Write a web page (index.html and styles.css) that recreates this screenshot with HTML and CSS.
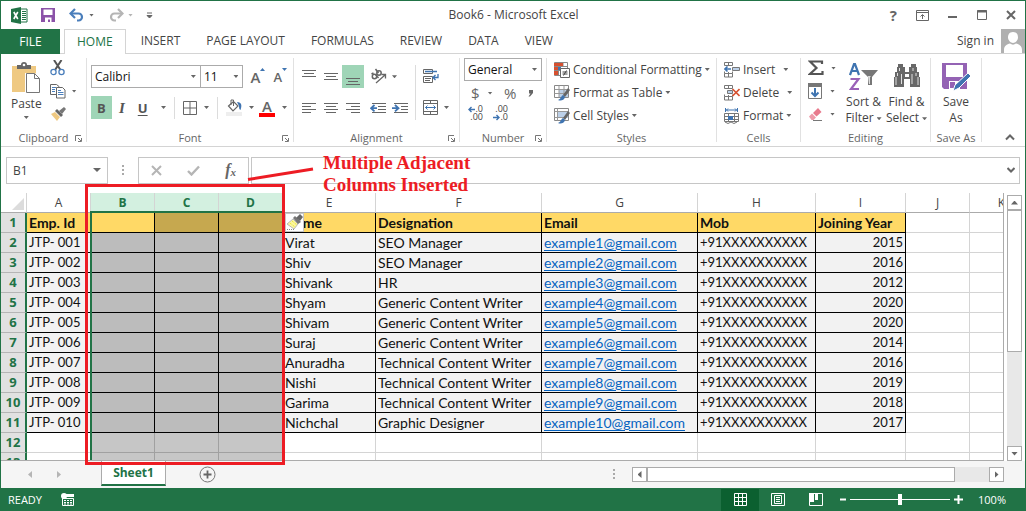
FILE: index.html
```html
<!DOCTYPE html>
<html lang="en">
<head>
<meta charset="utf-8">
<title>Book6 - Microsoft Excel</title>
<link rel="stylesheet" href="styles.css">
</head>
<body>
<div class="window">
  <header class="titlebar">
    <div class="quick">
      <svg class="logo" width="17" height="17" viewBox="0 0 17 17"><path d="M9 2h7v13H9z" fill="#fff" stroke="#217346"/><path d="M11 4.500h4M11 6.500h4M11 8.500h4M11 10.500h4M11 12.500h4" stroke="#217346"/><path d="M0 2l10-2v17L0 15z" fill="#217346"/><path d="M2.800 5l4 7M6.800 5l-4 7" stroke="#fff" stroke-width="1.600"/></svg>
      <button class="icon" aria-label="Save"><svg width="14" height="14" viewBox="0 0 14 14"><path d="M0 0h14v14H0z" fill="#8b52a8"/><path d="M2.500 1.500h9V7h-9zM4 9.500h6.500V14H9v-2.500H7V14H4z" fill="#fff"/></svg></button>
      <button class="icon undo" aria-label="Undo"><svg width="16" height="14" viewBox="0 0 16 14"><path d="M2 5.500h7.500a3.500 3.500 0 0 1 0 7H8" fill="none" stroke="#4a7ebb" stroke-width="2.200"/><path d="M6 1L1.500 5.500 6 10" fill="none" stroke="#4a7ebb" stroke-width="2.200"/></svg><span class="caret"></span></button>
      <button class="icon redo" aria-label="Redo"><svg width="16" height="14" viewBox="0 0 16 14"><path d="M14 5.500H6.500a3.500 3.500 0 0 0 0 7H8" fill="none" stroke="#b5b5b5" stroke-width="2.200"/><path d="M10 1l4.500 4.500L10 10" fill="none" stroke="#b5b5b5" stroke-width="2.200"/></svg><span class="caret pale"></span></button>
      <button class="icon customize" aria-label="Customize toolbar"><svg width="7" height="7" viewBox="0 0 7 7"><path d="M1 1h5M1 3.500h5L3.500 6z" stroke="#666" fill="#666" stroke-width="1"/></svg></button>
    </div>
    <h1 class="doc-title">Book6 - Microsoft Excel</h1>
    <div class="window-buttons">
      <button class="icon help" aria-label="Help">?</button>
      <button class="icon" aria-label="Ribbon display"><svg width="13" height="11" viewBox="0 0 13 11"><path d="M.5.5h12v10H.5zM.5 2.500h12M6.500 9V5M4.500 6.500l2-2 2 2" fill="none" stroke="#666"/></svg></button>
      <button class="icon" aria-label="Minimize"><svg width="10" height="10" viewBox="0 0 10 10"><path d="M0 7h9" stroke="#666" stroke-width="2"/></svg></button>
      <button class="icon" aria-label="Maximize"><svg width="10" height="10" viewBox="0 0 10 10"><path d="M.5.5h9v9h-9z" fill="none" stroke="#666"/><path d="M0 1.500h10" stroke="#666" stroke-width="2"/></svg></button>
      <button class="icon" aria-label="Close"><svg width="10" height="10" viewBox="0 0 10 10"><path d="M1 1l8 8M9 1L1 9" stroke="#666" stroke-width="2"/></svg></button>
    </div>
  </header>

  <nav class="tabs">
    <button class="tab file">FILE</button>
    <button class="tab active">HOME</button>
    <button class="tab">INSERT</button>
    <button class="tab">PAGE LAYOUT</button>
    <button class="tab">FORMULAS</button>
    <button class="tab">REVIEW</button>
    <button class="tab">DATA</button>
    <button class="tab">VIEW</button>
    <a class="sign-in" href="#">Sign in</a>
    <svg class="avatar" width="24" height="24" viewBox="0 0 24 24"><path d="M0 0h24v24H0z" fill="#b0b0b0"/><path d="M12 3c4 0 5 3 5 5.500S14.500 14 12 14 7 11 7 8.500 8 3 12 3z" fill="#fff"/><path d="M3 24v-3c0-4 3-6 6-6.500 2 1.500 4 1.500 6 0 3 .5 6 2.500 6 6.500v3z" fill="#fff"/></svg>
  </nav>

  <section class="ribbon">
    <div class="group clipboard">
      <div class="body">
        <button class="big">
          <svg width="29" height="32" viewBox="0 0 29 32"><path d="M0 4h24v26H0z" fill="#efc982"/><path d="M5 7V3h4a3 3 0 0 1 6 0h4v4z" fill="#666"/><circle cx="12" cy="3" r="1.300" fill="#fff"/><path d="M13 11h10l6 6v14H13z" fill="#fff"/><path d="M14.500 11.500h8l5 5v14h-13zM22.500 11.500v5h5" fill="#fff" stroke="#777"/></svg>
          <span>Paste</span><span class="caret"></span>
        </button>
        <div class="stack">
          <button class="icon" aria-label="Cut"><svg width="16" height="16" viewBox="0 0 16 16"><path d="M4 0l6.500 10M11.500 0L5 10" stroke="#555" stroke-width="2"/><circle cx="3.500" cy="12" r="2.600" fill="none" stroke="#4a7ebb" stroke-width="1.300"/><circle cx="11.500" cy="12" r="2.600" fill="none" stroke="#4a7ebb" stroke-width="1.300"/></svg></button>
          <button class="icon" aria-label="Copy"><svg width="16" height="16" viewBox="0 0 16 16"><path d="M.5 1.500h6l2.500 2v8H.5z" fill="#fff" stroke="#666"/><path d="M2 4.500h4M2 6.500h3M2 8.500h3" stroke="#4a7ebb"/><path d="M6.500 4.500h6l2.500 2.500v8H6.500z" fill="#fff" stroke="#666"/><path d="M8 7.500h3M8 9.500h5.500M8 11.500h5.500" stroke="#4a7ebb"/></svg><span class="caret"></span></button>
          <button class="icon" aria-label="Format painter"><svg width="17" height="16" viewBox="0 0 17 16"><path d="M1 8l4-2 5 5-3 4z" fill="#efc982"/><path d="M5 5l2-2 6 6-2 2z" fill="#666"/><path d="M9 5l5-4 2 2-4 5z" fill="#777"/></svg></button>
        </div>
      </div>
      <div class="label">Clipboard<svg class="launcher" width="7" height="7" viewBox="0 0 7 7"><path d="M.5 6V.5H6M3 3l3 3M6.500 3v3.500H3" fill="none" stroke="#777"/></svg></div>
    </div>

    <div class="group font">
      <div class="body">
        <div class="row">
          <label class="combo family"><select aria-label="Font"><option>Calibri</option></select><span class="caret"></span></label>
          <label class="combo size"><select aria-label="Font size"><option>11</option></select><span class="caret"></span></label>
          <button class="icon grow" aria-label="Increase font size"><span class="glyph">A</span><svg width="5" height="4" viewBox="0 0 5 4"><path d="M0 3h5L2.500 0z" fill="#3f74b1"/></svg></button>
          <button class="icon shrink" aria-label="Decrease font size"><span class="glyph small">A</span><svg width="5" height="4" viewBox="0 0 5 4"><path d="M0 0h5L2.500 3z" fill="#3f74b1"/></svg></button>
        </div>
        <div class="row">
          <button class="square on"><b>B</b></button>
          <button class="square"><i class="italic">I</i></button>
          <button class="square"><b class="under">U</b></button>
          <span class="caret"></span>
          <span class="rule"></span>
          <button class="icon" aria-label="Borders"><svg width="14" height="14" viewBox="0 0 14 14"><path d="M.5.5h13v13H.5zM7 0v14M0 7h14" fill="none" stroke="#666"/></svg><span class="caret"></span></button>
          <span class="rule"></span>
          <button class="icon" aria-label="Fill color"><svg width="16" height="17" viewBox="0 0 16 17"><path d="M0 13h16v4H0z" fill="#eee"/><path d="M2.500 7l5-4.500L12 7l-5 5z" fill="#fff" stroke="#666" stroke-width="1.200"/><path d="M5 6V1h2.500v6" fill="none" stroke="#666"/><path d="M11 3c5 0 5 4 3.500 8-2-1-1-4-2-5z" fill="#3f74b1"/></svg><span class="caret"></span></button>
          <button class="icon text-color" aria-label="Font color"><span class="glyph colored">A</span><span class="caret"></span></button>
        </div>
      </div>
      <div class="label">Font<svg class="launcher" width="7" height="7" viewBox="0 0 7 7"><path d="M.5 6V.5H6M3 3l3 3M6.500 3v3.500H3" fill="none" stroke="#777"/></svg></div>
    </div>

    <div class="group alignment">
      <div class="body">
        <div class="align-grid">
          <button class="square" aria-label="Top align"><svg width="14" height="16" viewBox="0 0 14 16"><path d="M0 1.500h14M2 4.500h10M0 7.500h14" stroke="#666"/></svg></button>
          <button class="square" aria-label="Middle align"><svg width="14" height="16" viewBox="0 0 14 16"><path d="M0 4.500h14M2 7.500h10M0 10.500h14" stroke="#666"/></svg></button>
          <button class="square on" aria-label="Bottom align"><svg width="14" height="16" viewBox="0 0 14 16"><path d="M0 9.500h14M2 12.500h10M0 15.500h14" stroke="#666"/></svg></button>
          <button class="icon orient" aria-label="Orientation"><svg width="18" height="17" viewBox="0 0 18 17"><g fill="none" stroke="#666" stroke-width="1.500"><circle cx="4.500" cy="8.500" r="2.200"/><path d="M5.500 6.500l3 3.500M1.500 6l2-1"/><circle cx="9" cy="5" r="2.200"/><path d="M5.500 1l3 4"/></g><path d="M6 15l9-8M11.500 6.500H15.500V10.500" fill="none" stroke="#666" stroke-width="1.300"/></svg><span class="caret"></span></button>
          <button class="square" aria-label="Align left"><svg width="14" height="11" viewBox="0 0 14 11"><path d="M0 .5h14M0 3.500h9M0 6.500h14M0 9.500h9" stroke="#666"/></svg></button>
          <button class="square" aria-label="Center"><svg width="14" height="11" viewBox="0 0 14 11"><path d="M0 .5h14M2 3.500h10M0 6.500h14M2 9.500h10" stroke="#666"/></svg></button>
          <button class="square" aria-label="Align right"><svg width="14" height="11" viewBox="0 0 14 11"><path d="M0 .5h14M5 3.500h9M0 6.500h14M5 9.500h9" stroke="#666"/></svg></button>
          <div class="indents">
            <button class="icon" aria-label="Decrease indent"><svg width="16" height="11" viewBox="0 0 16 11"><path d="M2 .5h14M8 3.500h8M8 6.500h8M2 9.500h14" stroke="#666"/><path d="M1 5.200h6M4.500 2L1 5.200l3.500 3.200" fill="none" stroke="#3f74b1" stroke-width="1.800"/></svg></button>
            <button class="icon" aria-label="Increase indent"><svg width="16" height="11" viewBox="0 0 16 11"><path d="M2 .5h14M9 3.500h7M9 6.500h7M2 9.500h14" stroke="#666"/><path d="M0 5.200h6M3 2l3.500 3.200L3 8.400" fill="none" stroke="#3f74b1" stroke-width="1.800"/></svg></button>
          </div>
        </div>
        <span class="rule tall"></span>
        <div class="wrap-merge">
          <button class="icon" aria-label="Wrap text"><svg width="17" height="16" viewBox="0 0 17 16"><path d="M.5 1.500h9v4h-9zM.5 8.500h9v6h-9zM2 10.500h6M2 12.500h5" fill="none" stroke="#666"/><path d="M2 3.500h12M10 9.500h5V6M12.500 7L10 9.500l2.500 2.500" fill="none" stroke="#3f74b1" stroke-width="1.300"/></svg></button>
          <button class="icon" aria-label="Merge and center"><svg width="15" height="15" viewBox="0 0 15 15"><path d="M.5.5h14v14H.5zM.5 3.500h14M.5 11.500h14M7.500 0v3.500M7.500 11.500V15" fill="none" stroke="#666"/><path d="M2.500 7.500h10M4.500 5.500l-2 2 2 2M10.500 5.500l2 2-2 2" fill="none" stroke="#3f74b1"/></svg><span class="caret"></span></button>
        </div>
      </div>
      <div class="label">Alignment<svg class="launcher" width="7" height="7" viewBox="0 0 7 7"><path d="M.5 6V.5H6M3 3l3 3M6.500 3v3.500H3" fill="none" stroke="#777"/></svg></div>
    </div>

    <div class="group number">
      <div class="body">
        <label class="combo"><select aria-label="Number format"><option>General</option></select><span class="caret"></span></label>
        <div class="row symbols"><button class="icon">$<span class="caret"></span></button><button class="icon">%</button><button class="icon comma" aria-label="Comma style"><svg width="6" height="8" viewBox="0 0 6 8"><path d="M1 1h4v3L2 7.500H.5L2.500 4.500H1z" fill="#666"/></svg></button></div>
        <div class="row decimals">
          <button class="decimal" aria-label="Increase decimal"><span class="line"><svg width="7" height="7" viewBox="0 0 7 7"><path d="M1 3.500h6M3.500 1L1 3.500 3.500 6" fill="none" stroke="#3f74b1" stroke-width="1.400"/></svg>.0</span><span class="line">.00</span></button>
          <button class="decimal" aria-label="Decrease decimal"><span class="line">.00</span><span class="line"><svg width="7" height="7" viewBox="0 0 7 7"><path d="M0 3.500h6M3.500 1L6 3.500 3.500 6" fill="none" stroke="#3f74b1" stroke-width="1.400"/></svg>.0</span></button>
        </div>
      </div>
      <div class="label">Number<svg class="launcher" width="7" height="7" viewBox="0 0 7 7"><path d="M.5 6V.5H6M3 3l3 3M6.500 3v3.500H3" fill="none" stroke="#777"/></svg></div>
    </div>

    <div class="group styles">
      <div class="body list">
        <button class="item"><svg width="16" height="16" viewBox="0 0 16 16"><path d="M.5.5h13v13H.5zM.5 4.500h13M.5 8.500h6M4.500 0v14M9 0v5" fill="#fff" stroke="#888"/><path d="M0 1h9v3H0zM0 5h4v3H0zM0 9h4v4H0z" fill="#d6502f"/><path d="M4 5h3v3H4z" fill="#3f74b1"/><path d="M6.500 6.500h9v9h-9z" fill="#fff" stroke="#666"/><path d="M8.500 10h5M8.500 12h5M12.500 8.500l-3 5" stroke="#444"/></svg>Conditional Formatting<span class="caret"></span></button>
        <button class="item"><svg width="16" height="16" viewBox="0 0 16 16"><path d="M.5.5h14v12H.5z" fill="#fff" stroke="#888"/><path d="M5 5h9v7H5z" fill="#bcd0e8"/><path d="M.5 4.500h14M.5 8.500h14M5 .5v12M10 .5v12" stroke="#999"/><path d="M14 3l2 2-5 7-2-2z" fill="#666"/><path d="M9 10l2 2c-1 4-5 4-7 3 3-1 3-4 5-5z" fill="#3f74b1"/></svg>Format as Table<span class="caret"></span></button>
        <button class="item"><svg width="16" height="16" viewBox="0 0 16 16"><path d="M.5.5h14v12H.5z" fill="#fff" stroke="#888"/><path d="M4 4h10v6H4z" fill="#bcd0e8"/><path d="M.5 3.500h14M.5 9.500h10M3.500 .5v12" stroke="#999"/><path d="M14 3l2 2-5 7-2-2z" fill="#666"/><path d="M9 10l2 2c-1 4-5 4-7 3 3-1 3-4 5-5z" fill="#3f74b1"/></svg>Cell Styles<span class="caret"></span></button>
      </div>
      <div class="label">Styles</div>
    </div>

    <div class="group cells">
      <div class="body list">
        <button class="item"><svg width="16" height="16" viewBox="0 0 16 16"><path d="M.5.5h8v3h-8zM4.500.5v3M.5 11.500h8v3.500h-8zM4.500 10v5M.5 9.500v2M8.500 9.500v2" fill="none" stroke="#777"/><path d="M8.500 5.500h7v3h-7z" fill="#bcd0e8" stroke="#777"/><path d="M1 7h6M3.500 4.500L1 7l2.500 2.500" fill="none" stroke="#3f74b1" stroke-width="1.600"/></svg>Insert<span class="caret wide"></span></button>
        <button class="item"><svg width="16" height="16" viewBox="0 0 16 16"><path d="M.5.5h8v3h-8zM4.500.5v3M.5 11.500h8v3.500h-8zM4.500 10v5M.5 9.500v2M8.500 9.500v2" fill="none" stroke="#777"/><path d="M3.500 5.500h5v3h-5z" fill="#bcd0e8" stroke="#777"/><path d="M8.500 4l7 7M15.500 4l-7 7" stroke="#d6502f" stroke-width="1.600"/></svg>Delete<span class="caret wide"></span></button>
        <button class="item"><svg width="16" height="16" viewBox="0 0 16 16"><path d="M1.500 0v4M13.500 0v4M2 2h11M4 .5L2.500 2 4 3.500M11 .5L12.500 2 11 3.500" fill="none" stroke="#3f74b1"/><path d="M.5 5.500h14v8H.5zM.5 8.500h14M.5 11.500h14M4.500 5.500v8M10.500 5.500v8M1 14q3 3 6 0 3 3 6 0" fill="none" stroke="#777"/><path d="M4 8h5v4H4z" fill="#3f74b1"/></svg>Format<span class="caret"></span></button>
      </div>
      <div class="label">Cells</div>
    </div>

    <div class="group editing">
      <div class="body">
        <div class="stack">
          <button class="icon" aria-label="AutoSum"><svg width="16" height="16" viewBox="0 0 16 16"><path d="M14 4V1.500H2L8.500 8 2 14h12.500v-3" fill="none" stroke="#555" stroke-width="2.200"/></svg><span class="caret"></span></button>
          <button class="icon" aria-label="Fill"><svg width="15" height="16" viewBox="0 0 15 16"><path d="M.5.5h13v15H.5z" fill="#fff" stroke="#777"/><path d="M0 0h14v4H0z" fill="#777"/><path d="M7 5v8M3.500 9.500L7 13l3.500-3.500" fill="none" stroke="#3f74b1" stroke-width="2"/></svg><span class="caret"></span></button>
          <button class="icon" aria-label="Clear"><svg width="15" height="15" viewBox="0 0 15 15"><path d="M5 6l5-5 3.500 4-5 4.500z" fill="#e8798c"/><path d="M1 9.500l3-3 4 4-2.500 2.500H3.500z" fill="#ee9aa9"/><path d="M5 13.500h9" stroke="#777"/></svg><span class="caret"></span></button>
        </div>
        <button class="big">
          <svg width="30" height="30" viewBox="0 0 30 30"><path d="M1 13L5 2h1l4 11M3 9h5" fill="none" stroke="#3f74b1" stroke-width="2.200"/><path d="M1.500 17h8L2 27h8" fill="none" stroke="#9a62b8" stroke-width="2.200"/><path d="M12 8h17l-6 7v8h-4v-8z" fill="#777"/><path d="M19 14h3l-1 1v7h-1z" fill="#ddd"/></svg>
          <span>Sort &amp;</span><span>Filter<span class="caret"></span></span>
        </button>
        <button class="big">
          <svg width="28" height="30" viewBox="0 0 28 30"><path d="M5 2h5v3h2v5h4V5h2V2h5v3h1v5h2v5h1v10H17v-8h-6v8H1V15h1v-5h2V5h1z" fill="#686868"/><path d="M3 15v8M4.500 11v3M6.500 6v3M8.500 12v10M19 12v10M20 6v3M23 11v3M25 15v8" stroke="#fff" stroke-width=".8"/><path d="M12 12h4v3h-4z" fill="#fff"/></svg>
          <span>Find &amp;</span><span>Select<span class="caret"></span></span>
        </button>
      </div>
      <div class="label">Editing</div>
    </div>

    <div class="group save-as">
      <div class="body">
        <button class="big">
          <svg width="30" height="30" viewBox="0 0 30 30"><path d="M1 1h25v26H3l-2-2z" fill="#9463b4"/><path d="M5 3h17v12H5zM8 19h11v8H8z" fill="#fff"/><path d="M9 20h5v6H9z" fill="#9463b4"/><path d="M12 29l2-6L27 11l3 3-12 12z" fill="#3f74b1" stroke="#fff"/></svg>
          <span>Save</span><span>As</span>
        </button>
      </div>
      <div class="label">Save As</div>
    </div>
    <button class="icon collapse" aria-label="Collapse ribbon"><svg width="10" height="7" viewBox="0 0 10 7"><path d="M1 5.500l4-4 4 4" fill="none" stroke="#666" stroke-width="2"/></svg></button>
  </section>

  <main class="workspace">
    <div class="formula-row">
      <label class="name-box"><input aria-label="Name box" value="B1"><span class="caret large"></span></label>
      <span class="grip"></span>
      <div class="formula-buttons">
        <button class="icon" aria-label="Cancel"><svg width="11" height="11" viewBox="0 0 11 11"><path d="M1 1l9 9M10 1l-9 9" stroke="#b5b5b5" stroke-width="2"/></svg></button>
        <button class="icon" aria-label="Enter"><svg width="13" height="11" viewBox="0 0 13 11"><path d="M1 6l3.500 3.500L12 1.500" fill="none" stroke="#b5b5b5" stroke-width="2.400"/></svg></button>
        <button class="icon fx" aria-label="Insert function">f<small>x</small></button>
      </div>
      <div class="formula-box"><input aria-label="Formula bar" value=""><svg width="8" height="6" viewBox="0 0 8 6"><path d="M.5 1L4 4.500 7.500 1" fill="none" stroke="#666" stroke-width="2"/></svg></div>
    </div>

    <div class="sheet">
      <div class="grid">
        <table>
          <colgroup><col class="c-row"><col class="c-std"><col class="c-std"><col class="c-std"><col class="c-std"><col class="c-e"><col class="c-f"><col class="c-g"><col class="c-h"><col class="c-i"><col class="c-std"><col class="c-std"></colgroup>
          <thead><tr><th class="corner"><svg width="12" height="12" viewBox="0 0 12 12"><path d="M12 0v12H0z" fill="#dcdcdc"/></svg></th><th>A</th><th>B</th><th>C</th><th>D</th><th>E</th><th>F</th><th>G</th><th>H</th><th>I</th><th>J</th><th>K</th></tr></thead>
          <tbody>
            <tr class="heading"><th>1</th><td>Emp. Id</td><td></td><td></td><td></td><td>Name</td><td>Designation</td><td>Email</td><td>Mob</td><td>Joining Year</td><td></td><td></td></tr>
            <tr class="data"><th>2</th><td>JTP- 001</td><td></td><td></td><td></td><td>Virat</td><td>SEO Manager</td><td><a href="#">example1@gmail.com</a></td><td>+91XXXXXXXXXX</td><td>2015</td><td></td><td></td></tr>
            <tr class="data"><th>3</th><td>JTP- 002</td><td></td><td></td><td></td><td>Shiv</td><td>SEO Manager</td><td><a href="#">example2@gmail.com</a></td><td>+91XXXXXXXXXX</td><td>2016</td><td></td><td></td></tr>
            <tr class="data"><th>4</th><td>JTP- 003</td><td></td><td></td><td></td><td>Shivank</td><td>HR</td><td><a href="#">example3@gmail.com</a></td><td>+91XXXXXXXXXX</td><td>2012</td><td></td><td></td></tr>
            <tr class="data"><th>5</th><td>JTP- 004</td><td></td><td></td><td></td><td>Shyam</td><td>Generic Content Writer</td><td><a href="#">example4@gmail.com</a></td><td>+91XXXXXXXXXX</td><td>2020</td><td></td><td></td></tr>
            <tr class="data"><th>6</th><td>JTP- 005</td><td></td><td></td><td></td><td>Shivam</td><td>Generic Content Writer</td><td><a href="#">example5@gmail.com</a></td><td>+91XXXXXXXXXX</td><td>2020</td><td></td><td></td></tr>
            <tr class="data"><th>7</th><td>JTP- 006</td><td></td><td></td><td></td><td>Suraj</td><td>Generic Content Writer</td><td><a href="#">example6@gmail.com</a></td><td>+91XXXXXXXXXX</td><td>2014</td><td></td><td></td></tr>
            <tr class="data"><th>8</th><td>JTP- 007</td><td></td><td></td><td></td><td>Anuradha</td><td>Technical Content Writer</td><td><a href="#">example7@gmail.com</a></td><td>+91XXXXXXXXXX</td><td>2016</td><td></td><td></td></tr>
            <tr class="data"><th>9</th><td>JTP- 008</td><td></td><td></td><td></td><td>Nishi</td><td>Technical Content Writer</td><td><a href="#">example8@gmail.com</a></td><td>+91XXXXXXXXXX</td><td>2019</td><td></td><td></td></tr>
            <tr class="data"><th>10</th><td>JTP- 009</td><td></td><td></td><td></td><td>Garima</td><td>Technical Content Writer</td><td><a href="#">example9@gmail.com</a></td><td>+91XXXXXXXXXX</td><td>2018</td><td></td><td></td></tr>
            <tr class="data"><th>11</th><td>JTP- 010</td><td></td><td></td><td></td><td>Nichchal</td><td>Graphic Designer</td><td><a href="#">example10@gmail.com</a></td><td>+91XXXXXXXXXX</td><td>2017</td><td></td><td></td></tr>
            <tr><th>12</th><td></td><td></td><td></td><td></td><td></td><td></td><td></td><td></td><td></td><td></td><td></td></tr>
            <tr><th>13</th><td></td><td></td><td></td><td></td><td></td><td></td><td></td><td></td><td></td><td></td><td></td></tr>
          </tbody>
        </table>
        <div class="selection"></div>
        <button class="insert-options" aria-label="Insert options"><svg width="17" height="17" viewBox="0 0 17 17"><path d="M7 5l5 5-4 5-7-5z" fill="#fbf7a0" stroke="#b9b9b9"/><path d="M4 9l5 4M6 7l5 4" stroke="#e8df20" stroke-dasharray="1 1"/><path d="M1 15.500h7" stroke="#888" stroke-dasharray="1 1"/><path d="M7 4l2-2 6 6-3 2z" fill="#777"/><path d="M10 4l4-4 3 3-3 4z" fill="#666"/></svg></button>
      </div>
      <div class="vscroll">
        <button class="arrow-button" aria-label="Scroll up"><span class="tri up"></span></button>
        <div class="track"><div class="thumb"></div></div>
        <button class="arrow-button" aria-label="Scroll down"><span class="tri down"></span></button>
      </div>
    </div>

    <div class="callout-box"></div>
    <svg class="callout-line" width="68" height="15" viewBox="0 0 68 15"><path d="M1 12.500L66 2" stroke="#ed1c24" stroke-width="3"/></svg>
    <p class="callout-text">Multiple Adjacent<br>Columns Inserted</p>
  </main>

  <div class="sheet-tabs">
    <button class="icon nav-left" aria-label="Previous sheet"><span class="tri left pale"></span></button>
    <button class="icon nav-right" aria-label="Next sheet"><span class="tri right pale"></span></button>
    <button class="sheet-tab">Sheet1</button>
    <button class="icon add" aria-label="New sheet"><svg width="17" height="17" viewBox="0 0 17 17"><circle cx="8.500" cy="8.500" r="7.500" fill="none" stroke="#777"/><path d="M8.500 4.500v8M4.500 8.500h8" stroke="#666" stroke-width="1.800"/></svg></button>
    <span class="grip"></span>
    <div class="hscroll">
      <button class="arrow-button" aria-label="Scroll left"><span class="tri left"></span></button>
      <div class="track"><div class="thumb"></div></div>
      <button class="arrow-button" aria-label="Scroll right"><span class="tri right"></span></button>
    </div>
  </div>

  <footer class="status">
    <span class="ready">READY</span>
    <svg width="14" height="13" viewBox="0 0 14 13"><path d="M1 5.500h11.500v7H1.500V6" fill="none" stroke="#fff"/><path d="M5 1h8v3H5z" fill="#fff"/><circle cx="3" cy="3" r="3" fill="#fff"/><path d="M3 7.500h9M3 9.500h9M3 11h9" stroke="#fff" stroke-dasharray="2 1"/></svg>
    <div class="views">
      <button class="view on" aria-label="Normal view"><svg width="13" height="13" viewBox="0 0 13 13"><path d="M.5.5h12v12H.5zM4.500 0v13M8.500 0v13M0 4.500h13M0 8.500h13" fill="none" stroke="#fff"/></svg></button>
      <button class="view" aria-label="Page layout view"><svg width="14" height="13" viewBox="0 0 14 13"><path d="M.5.5h13v12H.5zM3.500 2.500h7v8h-7zM5 4.500h4M5 6.500h4M5 8.500h4" fill="none" stroke="#fff"/></svg></button>
      <button class="view" aria-label="Page break view"><svg width="14" height="13" viewBox="0 0 14 13"><path d="M.5.5h13v12H.5z" fill="none" stroke="#fff"/><path d="M0 0h5v9H0zM6 0h3v7H6z" fill="#fff"/></svg></button>
    </div>
    <button class="icon zoom-out" aria-label="Zoom out"><svg width="9" height="9" viewBox="0 0 9 9"><path d="M1 4.500h6" stroke="#fff" stroke-width="2"/></svg></button>
    <input class="zoom" type="range" min="0" max="100" value="50" aria-label="Zoom">
    <button class="icon zoom-in" aria-label="Zoom in"><svg width="9" height="9" viewBox="0 0 9 9"><path d="M0 4.500h9M4.500 0v9" stroke="#fff" stroke-width="2"/></svg></button>
    <span class="percent">100%</span>
  </footer>
</div>
</body>
</html>
```
FILE: styles.css
```css
* { box-sizing: border-box; }
html, body { height: 100%; margin: 0; }
body { font: 12px/16px "Open Sans", "Noto Sans", sans-serif; color: #444; background: #fff; }
button, input, select { font: inherit; color: inherit; border: 0; margin: 0; padding: 0; background: none; }
svg { display: block; flex: none; }

.window { display: flex; flex-direction: column; height: 100vh; border: 1px solid #217346; border-bottom: 0; overflow: hidden; }
.icon { display: flex; align-items: center; }
.caret { flex: none; width: 5px; height: 3px; background: #666; clip-path: polygon(0 0, 100% 0, 50% 100%); }
.caret.pale { background: #b5b5b5; }
.caret.large { width: 8px; height: 4px; }

/* title bar */
.titlebar { display: grid; grid-template-columns: 1fr auto 1fr; align-items: center; height: 28px; flex: none; padding: 0 9px 0 10px; }
.quick { display: flex; align-items: center; }
.quick .logo { margin-right: 13px; }
.quick .icon { gap: 4px; }
.quick .undo, .quick .redo { margin-left: 14px; }
.quick .customize { margin-left: 13px; }
.doc-title { margin: 0; font-size: 12px; font-weight: 400; }
.window-buttons { display: flex; justify-content: flex-end; align-items: center; gap: 19px; }
.help { font-size: 15px; font-weight: 700; color: #666; }

/* ribbon tabs */
.tabs { display: flex; height: 25px; flex: none; border-bottom: 1px solid #d4d4d4; }
.tab { padding: 0 13px; }
.tab.file { width: 59px; margin-right: 4px; background: #217346; color: #fff; height: 25px; }
.tab.active { height: 25px; margin-right: 2px; padding: 0 12px; border: 1px solid #d4d4d4; border-bottom: 0; background: #fff; color: #217346; }
.sign-in { margin-left: auto; margin-right: 7px; line-height: 24px; color: #444; text-decoration: none; }

/* ribbon */
.ribbon { display: flex; height: 93px; flex: none; padding: 4px 0; border-bottom: 1px solid #d4d4d4; }
.group { display: flex; flex-direction: column; justify-content: space-between; flex: none; border-right: 1px solid #e1e1e1; }
.body { display: flex; }
.label { display: flex; justify-content: center; position: relative; height: 12px; line-height: 16px; color: #666; font-size: 11px; }
.launcher { position: absolute; right: 4px; bottom: 0; }
.big { display: flex; flex-direction: column; align-items: center; }
.big svg { margin-bottom: 2px; }
.big .caret { display: inline-block; margin-left: 3px; vertical-align: middle; }
.stack { display: flex; flex-direction: column; gap: 7px; }
.stack .icon { gap: 6px; height: 16px; }
.row { display: flex; align-items: center; }
.square { display: flex; align-items: center; justify-content: center; width: 22px; height: 23px; font-size: 13px; color: #555; }
.square.on { background: #9fd5b7; }
.rule { flex: none; width: 1px; height: 22px; background: #dcdcdc; }
.combo { display: flex; align-items: center; height: 23px; padding-right: 4px; border: 1px solid #ababab; color: #111; }
.combo select { flex: 1; min-width: 0; height: 100%; padding-left: 3px; appearance: none; outline: 0; }

.clipboard { width: 86px; }
.clipboard .body { padding: 2px 0 0 10px; gap: 8px; }
.clipboard .big { padding-top: 2px; }
.clipboard .big .caret { margin: 4px 0 0; }

.font { width: 207px; }
.font .body { flex-direction: column; gap: 8px; padding: 7px 6px 0 4px; }
.family { width: 111px; }
.size { width: 44px; margin-left: -1px; }
.glyph { font-size: 15px; line-height: 18px; font-weight: 600; color: #666; }
.glyph.small { font-size: 13px; }
.grow, .shrink { align-items: flex-start; }
.grow { margin-left: 7px; }
.shrink { margin-left: 8px; }
.italic { font-family: "Liberation Serif", serif; font-weight: 700; font-size: 15px; }
.under { text-decoration: underline; text-underline-offset: 2px; }
.font .row .icon .caret { margin-left: 7px; }
.font .row > .caret { margin: 0 8px; }
.font .row > .rule { margin-right: 8px; }
.font .row > .icon + .rule { margin-left: 8px; }
.font .row .text-color { margin-left: 5px; }
.colored { display: block; width: 16px; height: 18px; line-height: 15px; text-align: center; border-bottom: 4px solid #f00; }

.alignment { width: 166px; }
.alignment .body { padding: 7px 4px 0; }
.align-grid { display: grid; grid-template-columns: 22px 22px 22px 50px; gap: 8px 0; }
.orient { gap: 4px; padding-left: 6px; }
.indents { display: flex; gap: 6px; padding-left: 6px; }
.rule.tall { height: 55px; margin-left: 1px; }
.wrap-merge { display: flex; flex-direction: column; gap: 16px; padding: 3px 0 0 7px; }
.wrap-merge .icon { gap: 6px; }

.number { width: 87px; }
.number .body { flex-direction: column; padding: 0 4px; }
.symbols { justify-content: space-between; height: 24px; padding: 0 8px 0 7px; font-size: 15px; color: #666; }
.symbols .icon { gap: 8px; }
.decimals { gap: 9px; padding-left: 3px; }
.decimal { width: 16px; font-size: 9px; line-height: 8px; display: flex; flex-direction: column; align-items: flex-end; }
.line { display: flex; align-items: center; }

.list { flex-direction: column; padding-left: 7px; }
.item { display: flex; align-items: center; gap: 3px; height: 23px; white-space: nowrap; }
.item .caret { margin-left: 0; }
.item .caret.wide { margin-left: 5px; }
.styles { width: 170px; }
.cells { width: 84px; }

.editing { width: 130px; }
.editing .body { padding: 2px 0 0 7px; }
.editing .stack { width: 34px; }
.editing .stack .icon { gap: 7px; }
.editing .big { width: 43px; padding-top: 2px; white-space: nowrap; }
.save-as { width: 51px; }
.save-as .body { justify-content: center; padding-top: 4px; }
.collapse { margin: auto 10px 1px auto; }

/* formula bar */
.workspace { display: flex; flex-direction: column; flex: 1; min-height: 0; position: relative; }
.formula-row { display: flex; align-items: center; height: 46px; flex: none; padding: 0 5px; }
.formula-row input { flex: 1; min-width: 0; height: 100%; padding-left: 6px; outline: 0; }
.name-box, .formula-buttons, .formula-box { display: flex; align-items: center; height: 27px; border: 1px solid #c6c6c6; }
.name-box { width: 102px; padding-right: 6px; }
.grip { width: 2px; height: 11px; background: repeating-linear-gradient(#aaa 0 2px, transparent 2px 4px); }
.formula-row .grip { margin: 0 14px; }
.formula-buttons { width: 111px; justify-content: space-between; padding: 0 12px; margin-right: 2px; }
.fx { font: italic 700 16px "Liberation Serif", serif; color: #666; }
.fx small { font-size: 11px; padding-top: 4px; }
.formula-box { flex: 1; padding-right: 4px; }

/* worksheet */
.sheet { display: flex; flex: 1; min-height: 0; }
.grid { flex: 1; min-width: 0; position: relative; overflow: hidden; border-right: 1px solid #ababab; border-bottom: 1px solid #ababab; }
table { width: 1033px; table-layout: fixed; border-collapse: separate; border-spacing: 0; font: 14px/19px Lato, sans-serif; color: #111; }
.c-row { width: 26px; }
.c-std { width: 64px; }
.c-e { width: 93px; }
.c-f { width: 166px; }
.c-g { width: 156px; }
.c-h { width: 118px; }
.c-i { width: 90px; }
th, td { height: 20px; padding: 0 2px; border-right: 1px solid #d4d4d4; border-bottom: 1px solid #d4d4d4; white-space: nowrap; text-align: left; }
thead th { border-bottom-color: #ababab; text-align: center; font: 12px/19px "Open Sans", sans-serif; color: #444; }
thead th:nth-child(n+3):nth-child(-n+5) { background: #d3f0e0; color: #217346; font-weight: 700; }
.corner svg { margin: 3px 0 0 9px; }
tbody th { padding: 0; text-align: center; font: 700 13px/19px "Open Sans", sans-serif; color: #217346; background: #e1e1e1; border-right: 2px solid #217346; border-bottom-color: #b5b5b5; }
.heading td:nth-child(-n+10), .data td:nth-child(-n+10) { border-color: #000; }
.heading td:nth-child(-n+10) { background: #ffd966; font-weight: 700; }
.data td:nth-child(-n+10) { background: #f2f2f2; }
tbody tr td:nth-child(n+3):nth-child(-n+5) { background: #c6c6c6; border-color: #a0a0a0; }
tbody tr.data td:nth-child(n+3):nth-child(-n+5) { background: #bcbcbc; border-color: #000; }
tbody tr.heading td:nth-child(n+3):nth-child(-n+5) { background: #ffd966; border-color: #000; }
tbody tr.heading td:nth-child(n+4):nth-child(-n+5) { background: #c6a84f; }
.data td:nth-child(2), .data td:nth-child(9), .data td:nth-child(10) { font-size: 13px; }
.data td:nth-child(10) { text-align: right; }
td a { color: #0563c1; text-underline-offset: 2px; }
.selection { position: absolute; left: 89px; top: 18px; width: 194px; bottom: -3px; border: 2px solid #217346; }
.insert-options { position: absolute; left: 284px; top: 20px; width: 19px; height: 19px; background: #fff; border: 1px solid #c6c6c6; }

/* scroll bars */
.arrow-button { display: flex; align-items: center; justify-content: center; flex: none; width: 15px; height: 15px; background: #fff; border: 1px solid #ababab; }
.tri { width: 7px; height: 4px; background: #666; }
.tri.up { clip-path: polygon(50% 0, 100% 100%, 0 100%); }
.tri.down { clip-path: polygon(0 0, 100% 0, 50% 100%); }
.tri.left, .tri.right { width: 4px; height: 7px; }
.tri.left { clip-path: polygon(100% 0, 100% 100%, 0 50%); }
.tri.right { clip-path: polygon(0 0, 100% 50%, 0 100%); }
.tri.pale { background: #b5b5b5; }
.vscroll { display: flex; flex-direction: column; flex: none; width: 21px; padding: 2px 3px 0; }
.track { flex: 1; background: #e8e8e8; }
.thumb { background: #fff; border: 1px solid #ababab; }
.vscroll .thumb { height: 60%; }

/* callout */
.callout-box { position: absolute; left: 84px; top: 37px; width: 200px; bottom: -4px; z-index: 1; border: 3px solid #ed1c24; }
.callout-line { position: absolute; left: 246px; top: 20px; }
.callout-text { position: absolute; left: 322px; top: 5px; margin: 0; font: 700 19px/22px "Liberation Serif", serif; color: #ed1c24; }

/* sheet tabs */
.sheet-tabs { display: flex; align-items: center; height: 27px; flex: none; padding-right: 21px; background: #f5f5f5; }
.nav-left { margin-left: 27px; }
.nav-right { margin-left: 25px; }
.sheet-tab { align-self: flex-start; width: 65px; height: 25px; margin-left: 40px; background: #fff; border: 1px solid #ababab; border-width: 0 1px 2px; border-bottom-color: #217346; color: #217346; font-weight: 700; }
.add { margin-left: 33px; }
.sheet-tabs .grip { margin: 0 17px 0 auto; }
.hscroll { display: flex; width: 372px; }
.hscroll .track { display: flex; }
.hscroll .thumb { width: 90%; }

/* status bar */
.status { display: flex; align-items: center; height: 23px; flex: none; padding: 0 19px 0 7px; background: #217346; color: #fff; font-size: 11px; }
.ready { margin-right: 19px; }
.views { display: flex; margin-left: auto; }
.view { display: flex; align-items: center; justify-content: center; width: 38px; height: 22px; }
.view.on { background: #0b6030; }
.zoom-out { margin-left: 4px; }
.zoom { appearance: none; width: 100px; height: 12px; margin: 0 4px 0 2px; background: linear-gradient(#fff, #fff) center / 100% 1px no-repeat; }
.zoom::-webkit-slider-thumb { appearance: none; width: 4px; height: 11px; background: #fff; }
.zoom::-moz-range-thumb { width: 4px; height: 11px; border: 0; border-radius: 0; background: #fff; }
.percent { margin-left: 15px; }
```
